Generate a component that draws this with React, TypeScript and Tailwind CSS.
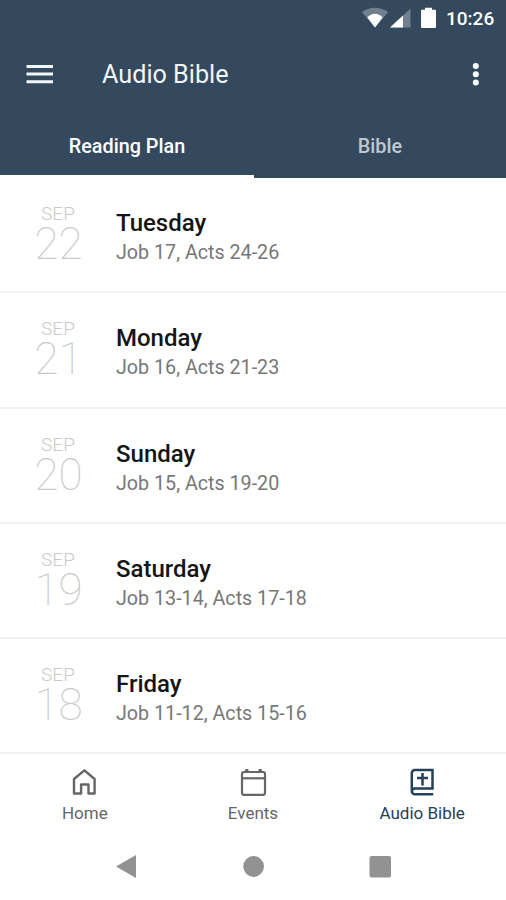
const readings = [
  { day: "22", name: "Tuesday", text: "Job 17, Acts 24-26" },
  { day: "21", name: "Monday", text: "Job 16, Acts 21-23" },
  { day: "20", name: "Sunday", text: "Job 15, Acts 19-20" },
  { day: "19", name: "Saturday", text: "Job 13-14, Acts 17-18" },
  { day: "18", name: "Friday", text: "Job 11-12, Acts 15-16" },
];

function StatusBar() {
  return (
    <div className="flex h-9 items-center pl-[361px]">
      <svg className="h-[22px] w-[76px] shrink-0" viewBox="0 0 76 22" fill="#fff">
        <path d="M1 5.200C8-.8 20-.8 27 5.200L14 20.500Z" opacity=".3" />
        <path d="M6.400 10.400c4.300-5 10.900-5 15.200 0L14 20.500Z" />
        <path d="M49.500 1.500v19H29Z" opacity=".3" />
        <path d="M42 8.600v11.900H29Z" />
        <path d="M64 .8h7v2h3q1 0 1 1v16.300q0 1-1 1h-13q-1 0-1-1V3.800q0-1 1-1H64Z" />
      </svg>
      <span className="ml-[9px] pt-px text-[19px] font-medium leading-6">10:26</span>
    </div>
  );
}

function HomeIcon() {
  return (
    <svg className="h-7 w-7" viewBox="0 0 28 28" fill="none" stroke="currentColor" strokeWidth="2.4" strokeLinejoin="round">
      <path d="M4 11 14.400 2.300 24.600 11v14.500h-6.100v-9h-7.400v9H4Z" />
    </svg>
  );
}

function EventsIcon() {
  return (
    <svg className="h-7 w-7" viewBox="0 0 28 28" fill="none" stroke="currentColor" strokeWidth="2.200">
      <rect x="3" y="4" width="23" height="22.800" rx="2" />
      <path d="M3 10.300h23" />
      <path d="M7.800 4V1M21.200 4V1" strokeWidth="3.200" />
    </svg>
  );
}

function BibleIcon() {
  return (
    <svg className="h-7 w-7" viewBox="0 0 28 28" fill="none" stroke="currentColor" strokeWidth="2.500">
      <path d="M25.200 26.300H7a3.200 3.200 0 0 1-3.200-3.200V5a3 3 0 0 1 3-3h17.700v18.500H7a3.200 3.200 0 0 0-3.200 3" />
      <path d="M14.500 5v12.500M9 10h11" />
    </svg>
  );
}

export default function App() {
  return (
    <div className="flex h-[900px] w-[506px] flex-col overflow-hidden bg-white font-['Roboto',sans-serif]">
      <header className="h-[178px] shrink-0 bg-[#34495e] text-white">
        <StatusBar />
        <div className="flex h-[78px] items-center pl-[26px] pr-[27px] text-[#f1f6fa]">
          <svg className="h-5 w-[27px]" viewBox="0 0 27 20" fill="currentColor">
            <path d="M.5 0h27v3H.5zM.5 7.500h27v3H.5zM.5 15.300h27v3H.5z" />
          </svg>
          <h1 className="ml-[49px] text-[25.200px] leading-8">Audio Bible</h1>
          <svg className="ml-auto h-6 w-[7px]" viewBox="0 0 7 24" fill="#fff">
            <circle cx="3.800" cy="3" r="3" />
            <circle cx="3.800" cy="11.300" r="3" />
            <circle cx="3.800" cy="19.600" r="3" />
          </svg>
        </div>
        <nav className="grid h-16 grid-cols-2 text-center text-[19.800px] font-medium leading-[66px]">
          <div className="relative h-16 pl-px">
            Reading Plan
            <span className="absolute bottom-0 left-0 h-[3px] w-[254px] bg-white" />
          </div>
          <div className="h-16 pl-px text-[#bfc8cf]">Bible</div>
        </nav>
      </header>
      <main className="flex h-[576.500px] shrink-0 flex-col">
        {readings.map((r) => (
          <article key={r.day} className="flex flex-1 border-b-2 border-[#f0f0f0]">
            <div className="w-[116px] pt-[26px] text-center text-[#c9c9c9]">
              <div className="text-[19px] font-light leading-5">SEP</div>
              <div className="pl-px text-[44px] font-thin leading-10">{r.day}</div>
            </div>
            <div className="pt-[30px]">
              <h2 className="text-2xl font-medium leading-[30px] text-[#151515]">{r.name}</h2>
              <p className="text-[19.700px] leading-[30px] text-[#777]">{r.text}</p>
            </div>
          </article>
        ))}
      </main>
      <nav className="grid h-[77.500px] shrink-0 grid-cols-3 text-[17px] leading-6 text-[#666]">
        <div className="flex flex-col items-center pt-[13.500px]"><HomeIcon /><span className="mt-[5px] pl-px">Home</span></div>
        <div className="flex flex-col items-center pt-[13.500px]"><EventsIcon /><span className="mt-[5px]">Events</span></div>
        <div className="flex flex-col items-center pt-[13.500px] text-[#24405a]"><BibleIcon /><span className="mt-[5px] pl-px">Audio Bible</span></div>
      </nav>
      <footer className="flex h-[68px] items-center pl-[116px]">
        <svg className="h-6 w-[276px]" viewBox="0 0 276 24" fill="#929292">
          <path d="M0 12.500 20 1v23Z" />
          <circle cx="137.600" cy="12.500" r="10.400" />
          <rect x="253.500" y="2" width="21.500" height="21.500" rx="2" />
        </svg>
      </footer>
    </div>
  );
}
